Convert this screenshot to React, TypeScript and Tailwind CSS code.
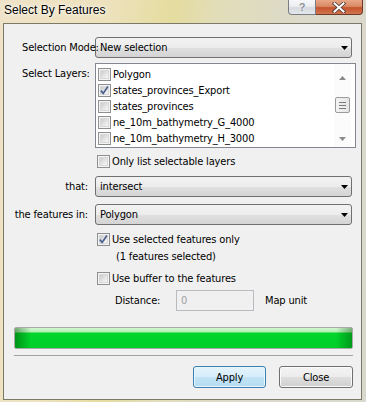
import React from "react";

const FONT = "font-['DejaVu_Sans_Condensed','Liberation_Sans',sans-serif]";

function CheckBox({ checked = false }: { checked?: boolean }) {
  return (
    <span className="relative block w-[13px] h-[13px] shrink-0 border border-[#8e8f8f] bg-[#f4f4f4] p-[1px]">
      <span className="block w-full h-full bg-[linear-gradient(135deg,#cbcbcb,#f8f8f8)] border border-[#d8d8d8]" />
      {checked && (
        <svg className="absolute left-0 top-0" width="11" height="11" viewBox="0 0 11 11">
          <path d="M1.8 5.6 L4.2 8.4 L8.9 1.6" fill="none" stroke="#4b6290" strokeWidth="1.7" />
        </svg>
      )}
    </span>
  );
}

function Combo({ value }: { value: string }) {
  return (
    <div className="w-[257px] h-[21px] flex items-center border border-[#707070] rounded-[3px] bg-[linear-gradient(to_bottom,#f3f3f3_0%,#ececec_50%,#e0e0e0_51%,#d4d4d4_100%)] pl-[4px] pr-[3px]">
      <span className="flex-1 leading-[13px]">{value}</span>
      <svg width="7" height="4" viewBox="0 0 7 4">
        <path d="M0 0H7L3.5 4Z" fill="#000" />
      </svg>
    </div>
  );
}

function ListItem({ label, checked }: { label: string; checked?: boolean }) {
  return (
    <div className="h-[16px] flex items-center pl-[2px] gap-[2px]">
      <CheckBox checked={checked} />
      <span className="leading-[13px] whitespace-nowrap">{label}</span>
    </div>
  );
}

function CheckRow({ label, checked }: { label: string; checked?: boolean }) {
  return (
    <div className="h-[16px] flex items-center gap-[2px]">
      <CheckBox checked={checked} />
      <span className="leading-[13px] whitespace-nowrap">{label}</span>
    </div>
  );
}

function Button({ label, primary }: { label: string; primary?: boolean }) {
  return (
    <div
      className={
        primary
          ? "w-[73px] h-[22px] flex items-center justify-center rounded-[3px] border border-[#3c7fb1] bg-[linear-gradient(to_bottom,#e5f4fc_0%,#d6edfa_50%,#c2e3f5_51%,#b5dcf2_100%)] shadow-[inset_0_0_0_1px_#e8f6fd]"
          : "w-[74px] h-[22px] flex items-center justify-center rounded-[3px] border border-[#707070] bg-[linear-gradient(to_bottom,#f3f3f3_0%,#ececec_50%,#dedede_51%,#d0d0d0_100%)] shadow-[inset_0_0_0_1px_#fbfbfb]"
      }
    >
      <span className="leading-[13px]">{label}</span>
    </div>
  );
}

export default function App() {
  return (
    <div className="w-[366px] h-[402px] flex flex-col bg-[linear-gradient(100deg,#efe2c8_0%,#ede2bd_25%,#e5dc9f_40%,#e2ddb8_50%,#dcdacb_70%,#d8d8cc_100%)]">
      {/* Title bar */}
      <div className="h-[23px] flex items-start shrink-0">
        <div className="pl-[4px] pt-[3px] font-['Liberation_Sans',sans-serif] text-[12px] leading-[14px] text-black [text-shadow:0_0_6px_#fff,0_0_3px_#fff]">
          Select By Features
        </div>
        <div className="flex-1" />
        <div className="flex mr-[3px]">
          <div className="w-[28px] h-[15px] rounded-bl-[4px] border border-t-0 border-[#7b7d83] bg-[linear-gradient(to_bottom,#f6f7f8_0%,#eceef0_45%,#d6dadf_55%,#e4e7eb_100%)] flex items-center justify-center">
            <span className="font-['Liberation_Sans',sans-serif] font-bold text-[11px] leading-[11px] text-[#8a8f96] [text-shadow:0_0_1px_#fff,0_0_1px_#fff]">
              ?
            </span>
          </div>
          <div className="w-[47px] h-[15px] rounded-br-[4px] border border-l-0 border-t-0 border-[#6e3a2a] bg-[linear-gradient(to_bottom,#e8a787_0%,#d98a66_45%,#c4532d_55%,#d2764f_100%)] flex items-center justify-center">
            <svg width="14" height="11" viewBox="0 0 14 11">
              <path d="M2.5 1.5 L11.5 9.5 M11.5 1.5 L2.5 9.5" stroke="#4a3a36" strokeWidth="3.6" strokeLinecap="square" />
              <path d="M2.5 1.5 L11.5 9.5 M11.5 1.5 L2.5 9.5" stroke="#ffffff" strokeWidth="2" strokeLinecap="square" />
            </svg>
          </div>
        </div>
      </div>

      {/* Client area */}
      <div className={`ml-[3px] mr-[4px] h-[377px] border border-[#7c7968] bg-[#f0f0f0] text-[11px] tracking-[-0.15px] text-black ${FONT} flex flex-col`}>
        {/* Selection mode */}
        <div className="flex items-center mt-[13px]">
          <div className="relative z-10 w-[91px] pl-[18px] leading-[13px] whitespace-nowrap">Selection Mode:</div>
          <Combo value="New selection" />
        </div>

        {/* Select layers */}
        <div className="flex items-start mt-[5px]">
          <div className="w-[91px] pl-[18px] pt-[4px] leading-[13px]">Select Layers:</div>
          <div className="w-[261px] h-[85px] border border-[#828790] bg-white flex">
            <div className="flex-1 pt-[2px] overflow-hidden">
              <ListItem label="Polygon" />
              <ListItem label="states_provinces_Export" checked />
              <ListItem label="states_provinces" />
              <ListItem label="ne_10m_bathymetry_G_4000" />
              <ListItem label="ne_10m_bathymetry_H_3000" />
            </div>
            <div className="w-[17px] mr-[4px] flex flex-col items-center bg-[#fbfbfb]">
              <div className="h-[18px] flex items-center justify-center mt-[5px]">
                <svg width="7" height="4" viewBox="0 0 7 4">
                  <path d="M0 4H7L3.5 0Z" fill="#8a8a8a" />
                </svg>
              </div>
              <div className="mt-[10px] w-[15px] h-[16px] rounded-[2px] border border-[#9b9b9b] bg-[linear-gradient(to_right,#f4f4f4,#e4e4e4)] flex flex-col items-center justify-center gap-[2px]">
                <div className="w-[7px] h-[1px] bg-[#7a7a7a]" />
                <div className="w-[7px] h-[1px] bg-[#7a7a7a]" />
                <div className="w-[7px] h-[1px] bg-[#7a7a7a]" />
              </div>
              <div className="flex-1" />
              <div className="h-[14px] flex items-center justify-center mb-[1px]">
                <svg width="7" height="4" viewBox="0 0 7 4">
                  <path d="M0 0H7L3.5 4Z" fill="#8a8a8a" />
                </svg>
              </div>
            </div>
          </div>
        </div>

        {/* Only list */}
        <div className="flex mt-[5px]">
          <div className="w-[93px]" />
          <CheckRow label="Only list selectable layers" />
        </div>

        {/* that */}
        <div className="flex items-center mt-[7px]">
          <div className="w-[91px] pr-[7px] text-right leading-[13px]">that:</div>
          <Combo value="intersect" />
        </div>

        {/* features in */}
        <div className="flex items-center mt-[7px]">
          <div className="w-[91px] pr-[7px] text-right leading-[13px] whitespace-nowrap">the features in:</div>
          <Combo value="Polygon" />
        </div>

        {/* use selected */}
        <div className="flex mt-[6px]">
          <div className="w-[93px]" />
          <CheckRow label="Use selected features only" checked />
        </div>
        <div className="flex mt-[1px] h-[16px] items-center">
          <div className="w-[112px]" />
          <span className="leading-[13px]">(1 features selected)</span>
        </div>

        {/* use buffer */}
        <div className="flex mt-[6px]">
          <div className="w-[93px]" />
          <CheckRow label="Use buffer to the features" />
        </div>

        {/* distance */}
        <div className="flex items-center mt-[4px]">
          <div className="w-[111px]" />
          <div className="w-[61px] leading-[13px]">Distance:</div>
          <div className="w-[78px] h-[21px] border border-[#b8bcc0] bg-[#f0f0f0] flex items-center pl-[4px]">
            <span className="leading-[13px] text-[#a0a0a0]">0</span>
          </div>
          <div className="ml-[11px] leading-[13px]">Map unit</div>
        </div>

        {/* progress */}
        <div className="mt-[16px] ml-[10px] w-[339px] h-[22px] rounded-[2px] border border-[#a9a9a9] bg-[linear-gradient(to_right,rgba(0,70,0,0.45)_0px,rgba(0,70,0,0)_16px,rgba(0,70,0,0)_calc(100%_-_16px),rgba(0,70,0,0.4)_100%),linear-gradient(to_bottom,#d2f7d2_0px,#b2f0b2_4px,#00d42c_5px,#00d02a_100%)]" />

        {/* separator */}
        <div className="mt-[6px] ml-[10px] w-[339px] h-[1px] bg-[#a0a0a0]" />

        {/* buttons */}
        <div className="flex mt-[10px]">
          <div className="w-[189px]" />
          <Button label="Apply" primary />
          <div className="w-[13px]" />
          <Button label="Close" />
        </div>
      </div>
    </div>
  );
}
